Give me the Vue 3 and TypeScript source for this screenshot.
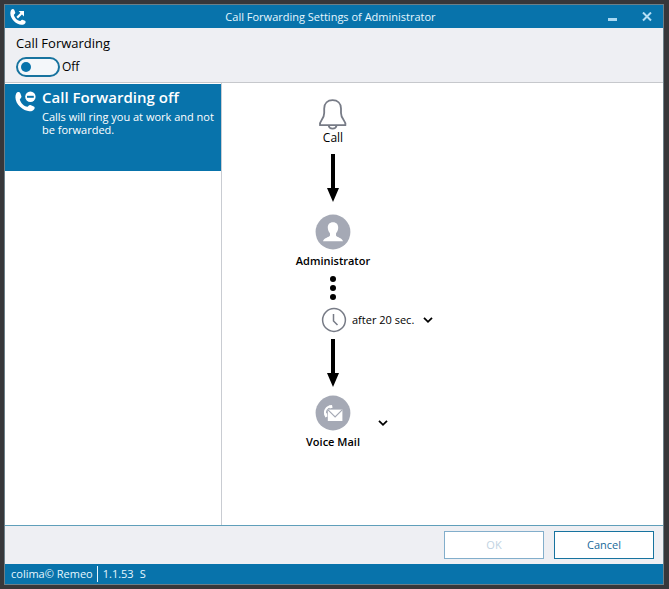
<script setup lang="ts">
import { ref } from 'vue'

const enabled = ref(false)
const delay = ref(20)
const delays: number[] = [5, 10, 15, 20, 30, 60]
</script>

<template>
  <div class="desktop">
    <main class="window">
      <header class="titlebar">
        <svg class="app-icon" width="18" height="18" viewBox="0 0 18 18" aria-hidden="true">
          <path class="handset" d="M2 2.2 C3 0.7 4.7 0.7 5.3 2 L6.2 4.3 C6.6 5.6 5 6.3 4.8 7 C5.6 10 8 12.4 11 13.1 C11.7 12.9 12.2 11.4 13.4 11.7 L16 12.8 C17.2 13.5 16.5 15.4 15.2 16.2 C9.5 19.5 -1.5 10 2 2.2 Z" />
          <path d="M8.2 9.6 L12.6 5.2" stroke="#fff" stroke-width="2.2" />
          <path class="handset" d="M9.6 3 H15 V8.4 Z" />
        </svg>
        <h1 class="title">Call Forwarding Settings of Administrator</h1>
        <div class="controls">
          <button class="control" type="button" aria-label="Minimize">
            <svg width="10" height="10" viewBox="0 0 10 10"><rect x="0" y="6" width="9" height="3" fill="#a9d8f2" /></svg>
          </button>
          <button class="control" type="button" aria-label="Close">
            <svg width="10" height="10" viewBox="0 0 10 10"><path d="M1 0.5 L9 8.5 M9 0.5 L1 8.5" stroke="#b5def5" stroke-width="2" /></svg>
          </button>
        </div>
      </header>

      <section class="switch-bar">
        <h2 class="switch-title">Call Forwarding</h2>
        <label class="switch">
          <input v-model="enabled" class="switch-input" type="checkbox" role="switch" />
          <span>{{ enabled ? 'On' : 'Off' }}</span>
        </label>
      </section>

      <div class="body">
        <aside class="sidebar">
          <button class="profile" type="button">
            <svg class="profile-icon" width="22" height="22" viewBox="0 0 22 22" aria-hidden="true">
              <path class="handset" d="M1.2 2.6 C2.4 0.8 4.5 0.6 5.3 2.2 L6.4 5.2 C6.8 6.7 5 7.5 4.8 8.4 C5.7 12 8.8 15 12.4 15.8 C13.3 15.6 13.9 13.8 15.4 14.1 L18.8 15.4 C20.4 16.2 19.6 18.4 18 19.4 C10.5 23.5 -3 12 1.2 2.6 Z" />
              <circle class="handset" cx="15.4" cy="5.8" r="5.2" />
              <path d="M12 5.8 H18.8" stroke="#0873ab" stroke-width="2" />
            </svg>
            <span class="profile-text">
              <strong class="profile-name">Call Forwarding off</strong>
              <span class="profile-info">Calls will ring you at work and not be forwarded.</span>
            </span>
          </button>
        </aside>

        <section class="flow">
          <div class="node">
            <svg width="30" height="31" viewBox="0 0 30 31" fill="none" stroke="#777b86" stroke-width="1.8" aria-hidden="true">
              <path d="M2 26.2 C1.2 21.5 6.2 20.8 6.2 14 V9.6 C6.2 4 9.8 1.2 14.6 1.2 C19.4 1.2 23 4 23 9.6 V14 C23 20.8 28.2 21.5 27.4 26.2 Z" />
              <path d="M10.6 26.4 C11.4 30.8 17.8 30.8 18.6 26.4" />
            </svg>
            <span class="node-label">Call</span>
          </div>

          <svg class="arrow" width="14" height="48" viewBox="0 0 14 48" aria-hidden="true">
            <path d="M5 0 H9 V34 H13 L7 48 L1 34 H5 Z" />
          </svg>

          <div class="node user">
            <svg width="36" height="36" viewBox="0 0 36 36" aria-hidden="true">
              <circle cx="18" cy="18" r="17.4" fill="#a5a9b5" />
              <path fill="#fff" d="M18 8.2 C21.5 8.2 23.4 10.5 23.2 14 C23 17 21.6 18.3 21 19.4 V21.4 C21.5 23.2 27 23.4 28 27.2 H8 C9 23.4 14.5 23.2 15 21.4 V19.4 C14.4 18.3 13 17 12.8 14 C12.6 10.5 14.5 8.2 18 8.2 Z" />
            </svg>
            <strong class="node-label">Administrator</strong>
          </div>

          <svg class="dots" width="8" height="26" viewBox="0 0 8 26" aria-hidden="true">
            <circle cx="4" cy="4" r="3" /><circle cx="4" cy="13" r="3" /><circle cx="4" cy="22" r="3" />
          </svg>

          <div class="delay">
            <svg width="26" height="26" viewBox="0 0 26 26" fill="none" stroke="#777b86" aria-hidden="true">
              <circle cx="13" cy="13" r="11.4" stroke-width="1.5" />
              <path d="M12.5 7 V14 L16.5 18" stroke-width="1.5" />
            </svg>
            <div class="picker">
              <select v-model="delay" class="picker-select" aria-label="Forwarding delay">
                <option v-for="d in delays" :key="d" :value="d">after {{ d }} sec.</option>
              </select>
              <svg class="chevron" width="10" height="8" viewBox="0 0 10 8" aria-hidden="true"><path d="M1 1.8 L5 5.8 L9 1.8" /></svg>
            </div>
          </div>

          <svg class="arrow" width="14" height="48" viewBox="0 0 14 48" aria-hidden="true">
            <path d="M5 0 H9 V34 H13 L7 48 L1 34 H5 Z" />
          </svg>

          <div class="target">
            <div class="node">
              <svg width="36" height="36" viewBox="0 0 36 36" aria-hidden="true">
                <circle cx="18" cy="18" r="17.4" fill="#a5a9b5" />
                <path fill="none" stroke="#fff" stroke-width="2" d="M10.6 20.5 C8.6 15.5 11.5 11.8 16.2 11.6" />
                <path fill="#fff" d="M13.6 10.4 L17 10 L17.6 12.8 L14.8 13.6 Z M9.2 18.6 L12 18.2 L12.4 21.6 L10.2 22.6 Z" />
                <path fill="#fff" d="M12.8 14.6 H27.4 V26 H12.8 Z" />
                <path d="M13 14.8 L20.1 22 L27.2 14.8" fill="none" stroke="#a5a9b5" stroke-width="1.2" />
              </svg>
              <strong class="node-label">Voice Mail</strong>
            </div>
            <button class="target-menu" type="button" aria-label="Choose target">
              <svg class="chevron" width="10" height="8" viewBox="0 0 10 8"><path d="M1 1.8 L5 5.8 L9 1.8" /></svg>
            </button>
          </div>
        </section>
      </div>

      <div class="actions">
        <button class="action" type="button" disabled>OK</button>
        <button class="action" type="button">Cancel</button>
      </div>

      <footer class="status">
        <span class="product">colima© Remeo</span>
        <span>1.1.53</span>
        <span class="mode">S</span>
      </footer>
    </main>
  </div>
</template>

<style>
body {
  margin: 0;
  background: #37373a;
}
</style>

<style scoped>
.desktop {
  box-sizing: border-box;
  display: flex;
  min-height: 100vh;
  padding: 4px 5px 4px 4px;
  background: #37373a;
  color: #000;
  font-family: "Open Sans", "Noto Sans", sans-serif;
  font-size: 11px;
  line-height: 16px;
}
button,
select {
  font: inherit;
}
.window {
  flex: 1;
  min-width: 0;
  display: flex;
  flex-direction: column;
  border: 1px solid #6c7f88;
  background: #fff;
}
.titlebar {
  display: grid;
  grid-template-columns: 1fr auto 1fr;
  align-items: center;
  height: 23px;
  padding: 0 11px 0 4px;
  background: #0873ab;
  color: #e6f7ff;
}
.handset {
  fill: #fff;
}
.title {
  margin: 0;
  font-size: 11px;
  font-weight: 400;
}
.controls {
  display: flex;
  justify-content: flex-end;
  gap: 24px;
}
.control {
  display: flex;
  padding: 0;
  border: 0;
  background: none;
}
.switch-bar {
  height: 55px;
  box-sizing: border-box;
  padding: 5px 11px 0;
  border-bottom: 1px solid #c6c8cc;
  background: #eeeff3;
}
.switch-title {
  margin: 0;
  font-size: 13px;
  font-weight: 400;
  line-height: 20px;
}
.switch {
  display: inline-flex;
  align-items: center;
  gap: 2px;
  margin-top: 4px;
  font-size: 12px;
}
.switch-input {
  appearance: none;
  display: flex;
  align-items: center;
  box-sizing: border-box;
  width: 44px;
  height: 20px;
  margin: 0;
  padding: 0 3px;
  border: 2px solid #17739f;
  border-radius: 10px;
  background: #f4f7fa;
}
.switch-input::before {
  content: "";
  width: 10px;
  height: 10px;
  border-radius: 50%;
  background: #0873ab;
}
.switch-input:checked {
  justify-content: flex-end;
}
.body {
  flex: 1;
  display: flex;
}
.sidebar {
  box-sizing: border-box;
  width: 217px;
  padding-top: 1px;
  border-right: 1px solid #c9ccd2;
}
.profile {
  display: flex;
  align-items: flex-start;
  gap: 5px;
  width: 100%;
  min-height: 87px;
  padding: 3px 4px 3px 10px;
  border: 0;
  background: #0873ab;
  color: #fff;
  text-align: left;
}
.profile-icon {
  flex: none;
  margin-top: 4px;
}
.profile-text {
  display: flex;
  flex-direction: column;
}
.profile-name {
  font-size: 15px;
  font-weight: 600;
  line-height: 20px;
  white-space: nowrap;
}
.profile-info {
  margin-top: 3px;
  line-height: 13px;
}
.flow {
  flex: 1;
  display: flex;
  flex-direction: column;
  align-items: flex-start;
  padding-top: 16px;
}
.node {
  display: flex;
  flex-direction: column;
  align-items: center;
  min-width: 222px;
}
.node-label {
  font-weight: 400;
}
span.node-label {
  font-size: 12px;
}
strong.node-label {
  margin-top: 3px;
  font-weight: 600;
}
.arrow {
  margin: 8px 0 0 104px;
}
.user {
  margin-top: 12px;
}
.dots {
  margin: 6px 0 0 107px;
}
.delay {
  display: flex;
  align-items: center;
  gap: 5px;
  margin: 6px 0 0 99px;
}
.delay + .arrow {
  margin-top: 6px;
}
.picker {
  display: grid;
  align-items: center;
}
.picker-select {
  grid-area: 1 / 1;
  appearance: none;
  padding: 0 18px 0 0;
  border: 0;
  background: none;
  color: #000;
}
.chevron {
  fill: none;
  stroke: #000;
  stroke-width: 1.8;
}
.picker .chevron {
  grid-area: 1 / 1;
  justify-self: end;
  pointer-events: none;
}
.target {
  display: grid;
  grid-template-columns: 1fr auto 1fr;
  align-items: center;
  width: 222px;
  margin-top: 8px;
}
.target .node {
  grid-column: 2;
  min-width: 0;
}
.target-menu {
  justify-self: start;
  display: flex;
  margin-left: 18px;
  padding: 0;
  border: 0;
  background: none;
}
.actions {
  display: flex;
  justify-content: flex-end;
  gap: 10px;
  padding: 5px 9px;
  border-top: 1px solid #5f9fba;
  background: #eeeff3;
}
.action {
  box-sizing: border-box;
  width: 100px;
  height: 28px;
  padding: 0;
  border: 1px solid #17739f;
  background: #fff;
  color: #17699a;
}
.action:disabled {
  border-color: #82aecb;
  color: #bfd3e2;
}
.status {
  display: flex;
  align-items: center;
  height: 20px;
  padding: 0 6px;
  background: #0873ab;
  color: #e6f7ff;
}
.product {
  margin-right: 5px;
  padding-right: 4px;
  border-right: 1px solid #e6f7ff;
}
.mode {
  margin-left: 6px;
}
</style>
